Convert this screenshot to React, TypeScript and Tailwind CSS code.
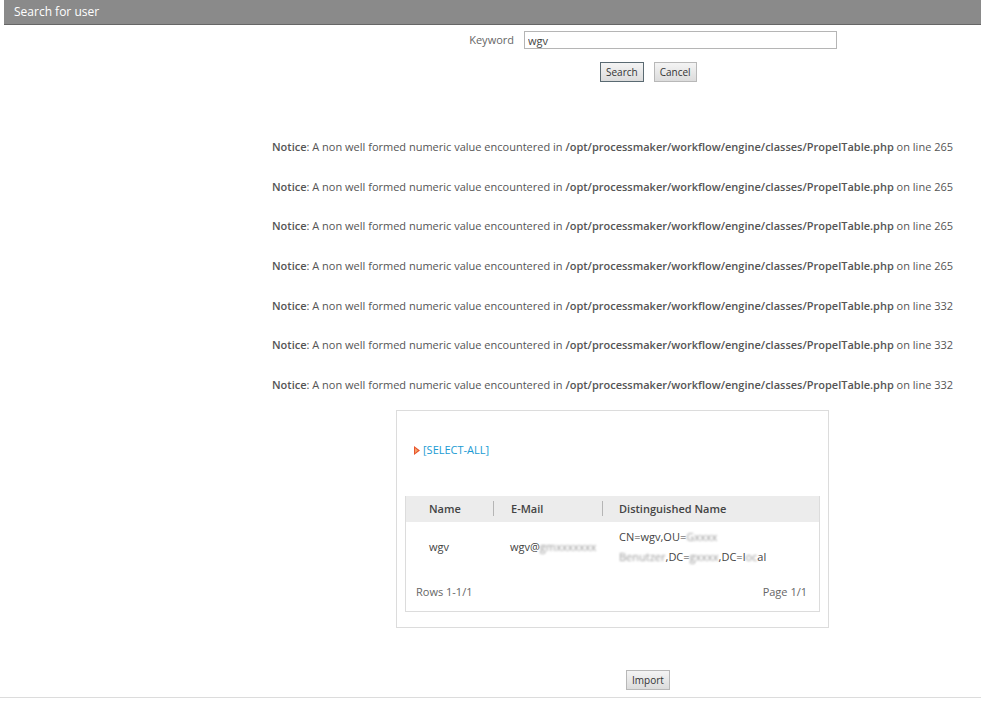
import React from "react";

const notices = ["265", "265", "265", "265", "332", "332", "332"];

const Blur: React.FC<{ children: React.ReactNode }> = ({ children }) => (
  <span className="blur-[1.2px] text-[#999]">{children}</span>
);

export default function App() {
  return (
    <div className="min-h-[710px] bg-white font-['Open_Sans',sans-serif] text-[#555]">
      {/* Title bar */}
      <div className="ml-[4px] h-[25px] bg-[#8a8a8a] border-b border-[#666] pl-[10px] text-[12px] leading-[24px] text-white">
        Search for user
      </div>

      {/* Search form */}
      <div className="grid grid-cols-[524px_1fr] items-center mt-[6px]">
        <label className="text-right pr-[10px] text-[11px] text-[#666]">Keyword</label>
        <input
          defaultValue="wgv"
          className="w-[313px] h-[18px] border border-[#b5b5b5] px-[3px] text-[11px] text-[#444] outline-none"
        />
      </div>
      <div className="flex gap-[10px] pl-[600px] mt-[13px]">
        <button className="h-[20px] px-[5px] border border-[#5a6a72] bg-gradient-to-b from-[#f4f4f4] to-[#dcdcdc] text-[10px] text-[#333] leading-[18px]">
          Search
        </button>
        <button className="h-[20px] px-[5px] border border-[#b8b8b8] bg-gradient-to-b from-[#f4f4f4] to-[#dcdcdc] text-[10px] text-[#333] leading-[18px]">
          Cancel
        </button>
      </div>

      {/* PHP notices */}
      <div className="mt-[45px] pl-[272px] text-[11px]">
        {notices.map((line, i) => (
          <div key={i} className="h-[39.7px] leading-[39.7px] whitespace-nowrap">
            <b className="font-semibold">Notice</b>: A non well formed numeric value encountered in{" "}
            <b className="font-semibold">/opt/processmaker/workflow/engine/classes/PropelTable.php</b> on line {line}
          </div>
        ))}
      </div>

      {/* Results panel */}
      <div className="ml-[396px] mt-[5px] w-[433px] border border-[#dcdcdc] px-[8px] pb-[15px]">
        <div className="flex items-center h-[85px] pb-[6px] pl-[9px] text-[11px] text-[#1a9bd3]">
          <svg width="6" height="9" viewBox="0 0 6 9" className="mr-[3px]">
            <path d="M0 0 L6 4.5 L0 9 Z" fill="#e8542c" />
            <path d="M1 2 L4 4.5 L1 7 Z" fill="#f4a26a" />
          </svg>
          [SELECT-ALL]
        </div>

        <div className="border border-[#dcdcdc] border-t-0">
          <div className="flex h-[26px] items-center bg-[#ececec] text-[11px] font-semibold text-[#444]">
            <div className="w-[87px] pl-[23px]">Name</div>
            <div className="w-[109px] pl-[17px] border-l border-[#b5b5b5] leading-[15px]">E-Mail</div>
            <div className="pl-[16px] border-l border-[#b5b5b5] leading-[15px]">Distinguished Name</div>
          </div>
          <div className="flex items-center h-[52px] pb-[2px] text-[11px] text-[#444]">
            <div className="w-[87px] pl-[23px]">wgv</div>
            <div className="w-[109px] pl-[17px] whitespace-nowrap">
              wgv@<Blur>gmxxxxxxx</Blur>
            </div>
            <div className="pl-[17px] leading-[20px] whitespace-nowrap">
              <div>
                CN=wgv,OU=<Blur>Gxxxx</Blur>
              </div>
              <div>
                <Blur>Benutzer</Blur>,DC=<Blur>gxxxx</Blur>,DC=l<Blur>oc</Blur>al
              </div>
            </div>
          </div>
          <div className="flex justify-between h-[37px] items-center px-[10px] text-[11px] text-[#666]">
            <span>Rows 1-1/1</span>
            <span className="pr-[2px]">Page 1/1</span>
          </div>
        </div>
      </div>

      {/* Import */}
      <div className="flex pl-[626px] mt-[42px]">
        <button className="h-[20px] px-[5px] border border-[#b8b8b8] bg-gradient-to-b from-[#f4f4f4] to-[#dcdcdc] text-[10px] text-[#333] leading-[18px]">
          Import
        </button>
      </div>
      <div className="mt-[7px] border-t border-[#dcdcdc]" />
    </div>
  );
}
